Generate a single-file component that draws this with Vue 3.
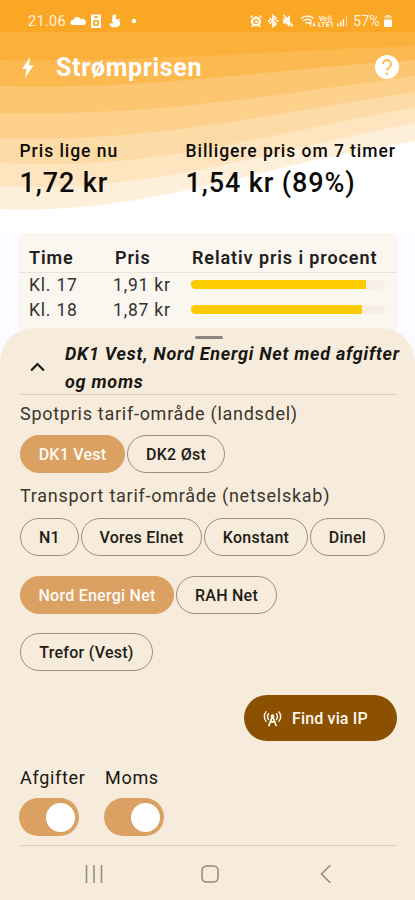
<script setup>
const bands = [
  { color: '#fbb03b', d: 'M0 32H415V240H0Z' },
  { color: '#fbb950', d: 'M0 60C150 62 290 50 415 46V240H0Z' },
  { color: '#fcc670', d: 'M0 86C150 91 280 68 415 60V240H0Z' },
  { color: '#fdd08c', d: 'M0 113C160 116 270 95 415 76V240H0Z' },
  { color: '#fddba6', d: 'M0 138C160 143 260 114 415 92V240H0Z' },
  { color: '#fee5c0', d: 'M0 163C150 171 255 137 415 107V240H0Z' },
  { color: '#feefda', d: 'M0 186C150 194 265 152 415 123V240H0Z' },
  { color: '#ffffff', d: 'M0 209C150 215 255 166 415 141V240H0Z' },
]
const rows = [
  { time: 'Kl. 17', price: '1,91 kr', percent: 90 },
  { time: 'Kl. 18', price: '1,87 kr', percent: 88 },
]
const areas = [
  { name: 'DK1 Vest', on: true, w: 'w105' },
  { name: 'DK2 Øst', w: 'w98' },
]
const nets = [
  [
    { name: 'N1', w: 'w59' },
    { name: 'Vores Elnet', w: 'w121' },
    { name: 'Konstant', w: 'w104' },
    { name: 'Dinel', w: 'w75' },
  ],
  [
    { name: 'Nord Energi Net', on: true, w: 'w154' },
    { name: 'RAH Net', w: 'w101' },
  ],
  [{ name: 'Trefor (Vest)', w: 'w133' }],
]
</script>

<template>
  <div class="screen">
    <header class="hero">
      <svg class="waves" viewBox="0 0 415 233" aria-hidden="true">
        <path v-for="(b, i) in bands" :key="i" :fill="b.color" :d="b.d" />
      </svg>
      <div class="status">
        <span class="clock">21.06</span>
        <svg class="left-icons" viewBox="0 0 68 16" fill="#fff">
          <path d="M3 12a2.600 2.600 0 0 1 .2-5.200A4.300 4.300 0 0 1 11 6.300a3 3 0 0 1 3 5.700z" />
          <path fill-rule="evenodd" d="M22 1.500h8a1 1 0 0 1 1 1V14a1 1 0 0 1-1 1h-8a1 1 0 0 1-1-1V2.500a1 1 0 0 1 1-1zM24.500 3v2h3V3zM26 6.800a3.200 3.200 0 1 0 0 6.400 3.200 3.200 0 0 0 0-6.400zm0 1.700a1.500 1.500 0 1 1 0 3 1.500 1.500 0 0 1 0-3z" />
          <path d="M42.500 2.500q1.500-1.500 3.500-.5V6.500l3.500-.7V8.500q1.200 1 .5 3-.8 2.800-4.800 2.800-5.200.2-5.700-2.800l1-1.500 1.800.8 1.200-1.300-1.500-1z" />
          <circle cx="64" cy="8" r="2.200" />
        </svg>
        <svg class="right-icons" viewBox="0 0 101 16" fill="none" stroke="#fff">
          <circle cx="7" cy="8.500" r="3.900" stroke-width="2.400" />
          <path stroke-width="1.600" d="M1.500 4.500l2-2M12.500 4.500l-2-2M7 6.500v2.500h2M2.500 14l1.500-1.500M11.500 14L10 12.500" />
          <path stroke-width="1.700" d="M20.500 5l6.500 6-3 2.500V2.500l3 2.500-6.500 6" />
          <circle cx="20" cy="8" r="1.200" fill="#fff" stroke="none" />
          <circle cx="28.300" cy="8" r="1.200" fill="#fff" stroke="none" />
          <path fill="#fff" stroke="none" d="M34 5.500h3l4-3.500v12l-4-3.500h-3z" />
          <path stroke-width="1.700" d="M34.500 2l9.500 11.500" />
          <path stroke-width="1.500" d="M52 5.500q6.500-5 13 0M54 8q4.500-3.500 9 0M56.500 10.300q2-1.500 4 0" />
          <path stroke-width="1.100" d="M61.500 13v-4m-1.300 1.300L61.500 9l1.300 1.300M65 9v4m-1.300-1.300L65 13l1.300-1.300" />
          <path stroke-width="1.500" d="M89 13.500v-3M91.700 13.500V8.500M94.400 13.500V6" />
          <path stroke-width="1" opacity=".65" d="M97.500 13.500V3" />
          <text class="tiny" x="70" y="7.500" textLength="13">Vo))</text>
          <text class="tiny" x="69" y="14" textLength="16">LTE1</text>
        </svg>
        <span class="battery">57%</span>
        <svg class="cell" viewBox="0 0 8 12" fill="#fff"><path d="M2.500 0h3v1.200H7a1 1 0 0 1 1 1V11a1 1 0 0 1-1 1H1a1 1 0 0 1-1-1V2.200a1 1 0 0 1 1-1h1.500z" /><path fill="#fbc36d" d="M0 1.500h8V5H0z" /></svg>
      </div>
      <div class="appbar">
        <svg class="bolt" viewBox="0 0 14 22" fill="#fff"><path d="M9.200 0L1 12.200h4.600L3.600 22 13 8.900H8.100z" /></svg>
        <h1>Strømprisen</h1>
        <svg class="help" viewBox="0 0 24 24"><circle cx="12" cy="12" r="12" fill="#fff" /><path d="M8 9.100a4 4 0 1 1 6.400 3.200Q12 14 12 15.500" fill="none" stroke="#fbbd61" stroke-width="2.100" /><circle cx="12" cy="18.800" r="1.300" fill="#fbbd61" /></svg>
      </div>
      <div class="prices">
        <div class="now"><p class="label">Pris lige nu</p><p class="value">1,72 kr</p></div>
        <div><p class="label">Billigere pris om 7 timer</p><p class="value">1,54 kr (89%)</p></div>
      </div>
    </header>

    <section class="table">
      <div class="row head"><span>Time</span><span class="hp">Pris</span><span class="hr">Relativ pris i procent</span></div>
      <div v-for="r in rows" :key="r.time" class="row">
        <span>{{ r.time }}</span><span>{{ r.price }}</span>
        <div class="track"><div class="fill" :style="{ width: r.percent + '%' }"></div></div>
      </div>
    </section>

    <section class="sheet">
      <div class="handle"></div>
      <div class="summary">
        <svg class="chevron" viewBox="0 0 14 9" fill="none" stroke="#191510" stroke-width="2"><path d="M1 7.800L7 1.800 13 7.800" /></svg>
        <p>DK1 Vest, Nord Energi Net med afgifter<br />og moms</p>
      </div>
      <h2 class="t1">Spotpris tarif-område (landsdel)</h2>
      <div class="chips first">
        <button v-for="a in areas" :key="a.name" :class="['chip', a.w, { on: a.on }]">{{ a.name }}</button>
      </div>
      <h2 class="t2">Transport tarif-område (netselskab)</h2>
      <div class="nets">
        <div v-for="(line, i) in nets" :key="i" class="chips">
          <button v-for="n in line" :key="n.name" :class="['chip', n.w, { on: n.on }]">{{ n.name }}</button>
        </div>
      </div>
      <button class="find">
        <svg viewBox="0 0 20 17" fill="none" stroke="#fff8ef"><path stroke-width="1.500" d="M3.500 1Q-.8 6.500 3.500 12M16.500 1q4.300 5.500 0 11M6.200 3Q3.300 6.500 6.200 10M13.800 3q2.900 3.500 0 7" /><circle cx="10" cy="6" r="1.900" fill="#fff8ef" stroke="none" /><path stroke-width="1.700" d="M10 6L6 16.500M10 6l4 10.500M7.800 12h4.400" /></svg>
        <span>Find via IP</span>
      </button>
      <div class="switches">
        <div class="sw"><span>Afgifter</span><div class="toggle"><i></i></div></div>
        <div class="sw"><span>Moms</span><div class="toggle"><i></i></div></div>
      </div>
      <nav class="nav">
        <svg viewBox="0 0 18 18"><path d="M1.500 0v18M9 0v18M16.500 0v18" /></svg>
        <svg viewBox="0 0 18 18"><rect x="1" y="1" width="16" height="16" rx="4.500" /></svg>
        <svg viewBox="0 0 18 18"><path d="M13.500 0L4.500 9l9 9" /></svg>
      </nav>
    </section>
  </div>
</template>

<style>
body { margin: 0; }
</style>

<style scoped>
* { box-sizing: border-box; }
p, h1, h2 { margin: 0; white-space: nowrap; }
button { font: inherit; margin: 0; padding: 0; }
svg { display: block; flex: none; }
.screen { width: 415px; height: 900px; overflow: hidden; display: flex; flex-direction: column; background: #fdfbff; font-family: Roboto, "Liberation Sans", sans-serif; color: #191713; }
.hero { height: 233px; flex: none; display: flex; flex-direction: column; position: relative; background: #f9a725; }
.waves { position: absolute; left: 0; top: 0; width: 415px; height: 233px; }
.status, .appbar, .prices { position: relative; }
.status { height: 42px; padding-left: 28px; display: flex; align-items: center; color: #fff3dc; }
.clock { width: 42px; font-size: 14.500px; letter-spacing: .3px; }
.left-icons { width: 68px; height: 16px; }
.right-icons { width: 101px; height: 16px; margin-left: 111px; opacity: .93; }
.tiny { font-size: 7px; font-weight: 700; fill: #fff; stroke: none; }
.battery { width: 31px; margin-left: 3px; font-size: 14.500px; }
.cell { width: 8px; height: 12px; }
.appbar { height: 50px; padding: 0 16px 0 21px; display: flex; align-items: center; color: #fff; }
.bolt { width: 14px; height: 21px; }
h1 { margin-left: 21px; flex: 1; font-size: 25px; font-weight: 700; letter-spacing: .65px; line-height: 32px; padding-top: 1px; }
.help { width: 24px; height: 24px; }
.prices { margin-top: 48px; padding-left: 19.500px; display: flex; color: #0d0b08; }
.now { width: 166px; }
.label { font-size: 17.500px; font-weight: 500; line-height: 22px; letter-spacing: .95px; }
.value { margin-top: 5px; font-size: 27px; font-weight: 500; line-height: 32px; letter-spacing: .9px; }
.table { width: 378px; height: 110px; flex: none; margin-left: 19px; padding-top: 3px; border-radius: 5px 5px 0 0; background: #f9f7ef; }
.row { height: 25px; padding-left: 10px; display: grid; grid-template-columns: 84px 78px 194px; align-items: center; font-size: 17.500px; letter-spacing: .8px; color: #35332f; white-space: nowrap; }
.row.head { height: 37px; margin-bottom: -1px; padding-top: 6px; border-bottom: 1px solid #e7e3d9; font-weight: 600; font-size: 18px; letter-spacing: .9px; color: #22201c; }
.hp { padding-left: 2px; }
.hr { padding-left: 1px; }
.track { height: 9px; border-radius: 5px; overflow: hidden; background: #f8eee6; }
.fill { height: 100%; background: #fdcb02; }
.sheet { position: relative; flex: 1; margin-top: -15px; border-radius: 34px 34px 0 0; background: #f7ecdb; padding: 8px 18px 0 20px; display: flex; flex-direction: column; align-items: flex-start; }
.handle { width: 28px; height: 3px; border-radius: 2px; background: #8b857d; align-self: center; }
.summary { width: 377px; height: 56px; padding-left: 10px; display: flex; align-items: center; border-bottom: 1px solid #d8cec1; }
.chevron { width: 15px; height: 10px; margin-top: 1px; }
.summary p { margin: 2px 0 0 20px; font-size: 18px; font-weight: 700; font-style: italic; line-height: 28px; letter-spacing: .74px; }
h2 { font-size: 18px; font-weight: 400; line-height: 24px; letter-spacing: .73px; color: #3a352e; }
.t1 { margin-top: 7px; }
.t2 { margin-top: 11px; }
.chips { display: flex; gap: 2px; }
.first { margin-top: 9px; }
.nets { margin-top: 10px; display: flex; flex-direction: column; gap: 19.500px; }
.chip { height: 38px; padding-top: 1px; border: 1px solid #998f83; border-radius: 19px; background: transparent; color: #211c16; font-size: 16px; font-weight: 500; letter-spacing: .25px; white-space: nowrap; }
.chip.on { background: #dba163; border-color: #dba163; color: #fffaf4; }
.w105 { width: 105px; } .w98 { width: 98px; } .w59 { width: 59px; } .w121 { width: 121px; }
.w104 { width: 104px; } .w75 { width: 75px; } .w154 { width: 154px; } .w101 { width: 101px; } .w133 { width: 133px; }
.find { align-self: flex-end; width: 153px; height: 46px; margin-top: 24px; border: 0; border-radius: 23px; background: #8b5000; color: #fff8ef; display: flex; align-items: center; padding-left: 19px; font-size: 16px; font-weight: 500; letter-spacing: .15px; }
.find svg { width: 19px; height: 17px; margin-right: 10px; }
.find span { padding-top: 1px; }
.switches { display: flex; width: 377px; height: 105px; border-bottom: 1px solid #d8cec1; padding-top: 25px; }
.sw { width: 85px; font-size: 18px; line-height: 24px; letter-spacing: .7px; }
.toggle { width: 60px; height: 38px; margin-top: 8px; margin-left: -1px; border-radius: 19px; background: #dba163; display: flex; justify-content: flex-end; align-items: center; padding-right: 4px; }
.toggle i { width: 29px; height: 29px; border-radius: 50%; background: #fff; }
.nav { align-self: stretch; display: flex; justify-content: space-between; padding: 19px 62px 0 65px; }
.nav svg { width: 18px; height: 18px; fill: none; stroke: #8f887b; stroke-width: 1.500; }
</style>
